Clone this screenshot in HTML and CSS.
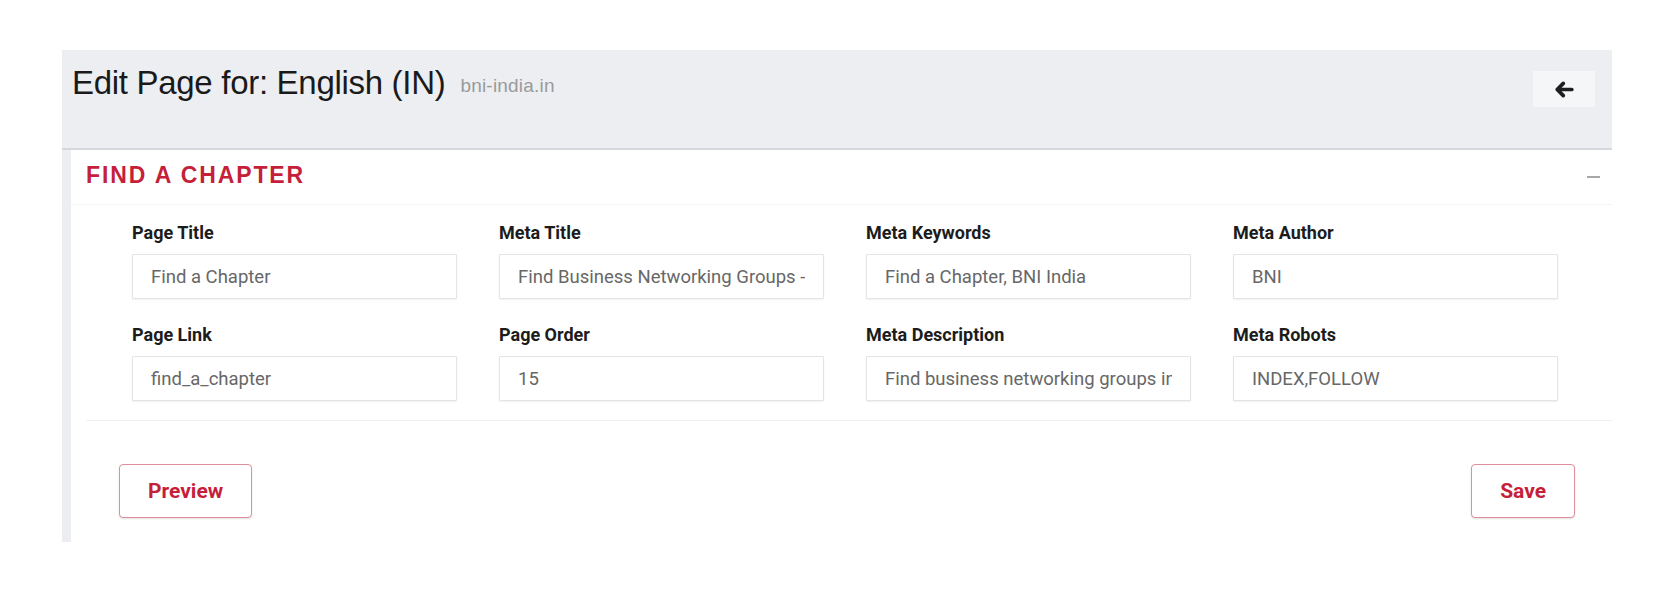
FILE: index.html
```html
<!DOCTYPE html>
<html lang="en">
<head>
<meta charset="utf-8">
<title>Edit Page</title>
<link rel="stylesheet" href="styles.css">
</head>
<body>
<div class="page">
  <div class="panel">
    <div class="panel-head">
      <h1 class="title">Edit Page for: English (IN) <span class="subtitle">bni-india.in</span></h1>
      <button class="back-btn" type="button" aria-label="Back">
        <svg class="back-icon" viewBox="-20 -20 488 552" aria-hidden="true"><path d="M9.4 233.4c-12.5 12.5-12.5 32.8 0 45.3l160 160c12.5 12.5 32.8 12.5 45.3 0s12.5-32.8 0-45.3L109.2 288 416 288c17.7 0 32-14.3 32-32s-14.3-32-32-32l-306.7 0L214.6 118.6c12.5-12.5 12.5-32.8 0-45.3s-32.8-12.5-45.3 0l-160 160z"/></svg>
      </button>
    </div>
    <div class="card">
      <div class="card-head">
        <h2 class="card-title">FIND A CHAPTER</h2>
        <span class="collapse" aria-label="Collapse"></span>
      </div>
      <div class="card-body">
        <div class="form-grid">
          <div class="field"><label class="label">Page Title</label><input class="input" type="text" value="Find a Chapter" readonly></div>
          <div class="field"><label class="label">Meta Title</label><input class="input" type="text" value="Find Business Networking Groups - BNI India" readonly></div>
          <div class="field"><label class="label">Meta Keywords</label><input class="input" type="text" value="Find a Chapter, BNI India" readonly></div>
          <div class="field"><label class="label">Meta Author</label><input class="input" type="text" value="BNI" readonly></div>
          <div class="field"><label class="label">Page Link</label><input class="input" type="text" value="find_a_chapter" readonly></div>
          <div class="field"><label class="label">Page Order</label><input class="input" type="text" value="15" readonly></div>
          <div class="field"><label class="label">Meta Description</label><input class="input" type="text" value="Find business networking groups in India" readonly></div>
          <div class="field"><label class="label">Meta Robots</label><input class="input" type="text" value="INDEX,FOLLOW" readonly></div>
        </div>
      </div>
      <div class="card-actions">
        <button class="btn" type="button">Preview</button>
        <button class="btn" type="button">Save</button>
      </div>
    </div>
  </div>
</div>
</body>
</html>
```

FILE: styles.css
```css
* { box-sizing: border-box; }

html, body {
  margin: 0;
  padding: 0;
  background: #ffffff;
}

.page {
  padding: 50px 66px 0 62px;
}

.panel {
  background: #eceef2;
  height: 492px;
  display: flex;
  flex-direction: column;
}

.panel-head {
  height: 100px;
  border-bottom: 2px solid #d4d7dc;
  display: flex;
  justify-content: space-between;
  align-items: flex-start;
  padding: 15px 17px 0 10px;
}

.title {
  margin: 0;
  font-family: "Liberation Sans", Arial, sans-serif;
  font-weight: 400;
  font-size: 33px;
  line-height: 36px;
  letter-spacing: -0.3px;
  color: #1a1a1a;
  display: flex;
  align-items: baseline;
  gap: 15px;
}

.subtitle {
  font-size: 19px;
  letter-spacing: 0.2px;
  color: #9a9a9a;
  position: relative;
  top: -2px;
}

.back-btn {
  margin-top: 6px;
  width: 62px;
  height: 36px;
  border: none;
  background: #f5f6f8;
  display: flex;
  align-items: center;
  justify-content: center;
  padding: 0;
  cursor: pointer;
}

.back-icon {
  width: 21px;
  height: 21px;
  fill: #1f1f1f;
  stroke: #1f1f1f;
  stroke-width: 34;
  stroke-linejoin: round;
}

.card {
  flex: 1;
  margin-left: 9px;
  background: #ffffff;
  display: flex;
  flex-direction: column;
}

.card-head {
  height: 55px;
  border-bottom: 1px solid #f4f4f4;
  display: flex;
  align-items: center;
  justify-content: space-between;
  padding: 0 12px 0 15px;
}

.card-title {
  margin: 0;
  font-family: "Liberation Sans", Arial, sans-serif;
  font-weight: 700;
  font-size: 23px;
  letter-spacing: 1.9px;
  color: #c51f3a;
  position: relative;
  top: -2px;
}

.collapse {
  width: 13px;
  height: 2px;
  background: #a8a8a8;
}

.card-body {
  margin-left: 15px;
  border-bottom: 1px solid #f0f1f3;
  padding: 17px 0 19px 46px;
}

.form-grid {
  display: grid;
  grid-template-columns: repeat(4, 325px);
  column-gap: 42px;
  row-gap: 25px;
}

.field {
  display: flex;
  flex-direction: column;
  gap: 11px;
}

.label {
  font-family: Roboto, "Noto Sans", sans-serif;
  font-weight: 700;
  font-size: 18px;
  line-height: 21px;
  color: #1c1c1c;
}

.input {
  width: 325px;
  height: 45px;
  border: 1px solid #e4e4e4;
  border-radius: 1px;
  box-shadow: 0 1px 2px rgba(0, 0, 0, 0.06);
  padding: 0 18px;
  font-family: Roboto, "Noto Sans", sans-serif;
  font-size: 18.5px;
  color: #676767;
  background: #ffffff;
  outline: none;
}

.card-actions {
  display: flex;
  justify-content: space-between;
  padding: 43px 37px 0 48px;
}

.btn {
  height: 54px;
  padding: 0 28px;
  background: #ffffff;
  border: 1px solid #de8f9b;
  border-radius: 4px;
  box-shadow: 0 1px 2px rgba(0, 0, 0, 0.12);
  font-family: Roboto, "Noto Sans", sans-serif;
  font-weight: 700;
  font-size: 21px;
  color: #c51f3a;
  cursor: pointer;
}
```
